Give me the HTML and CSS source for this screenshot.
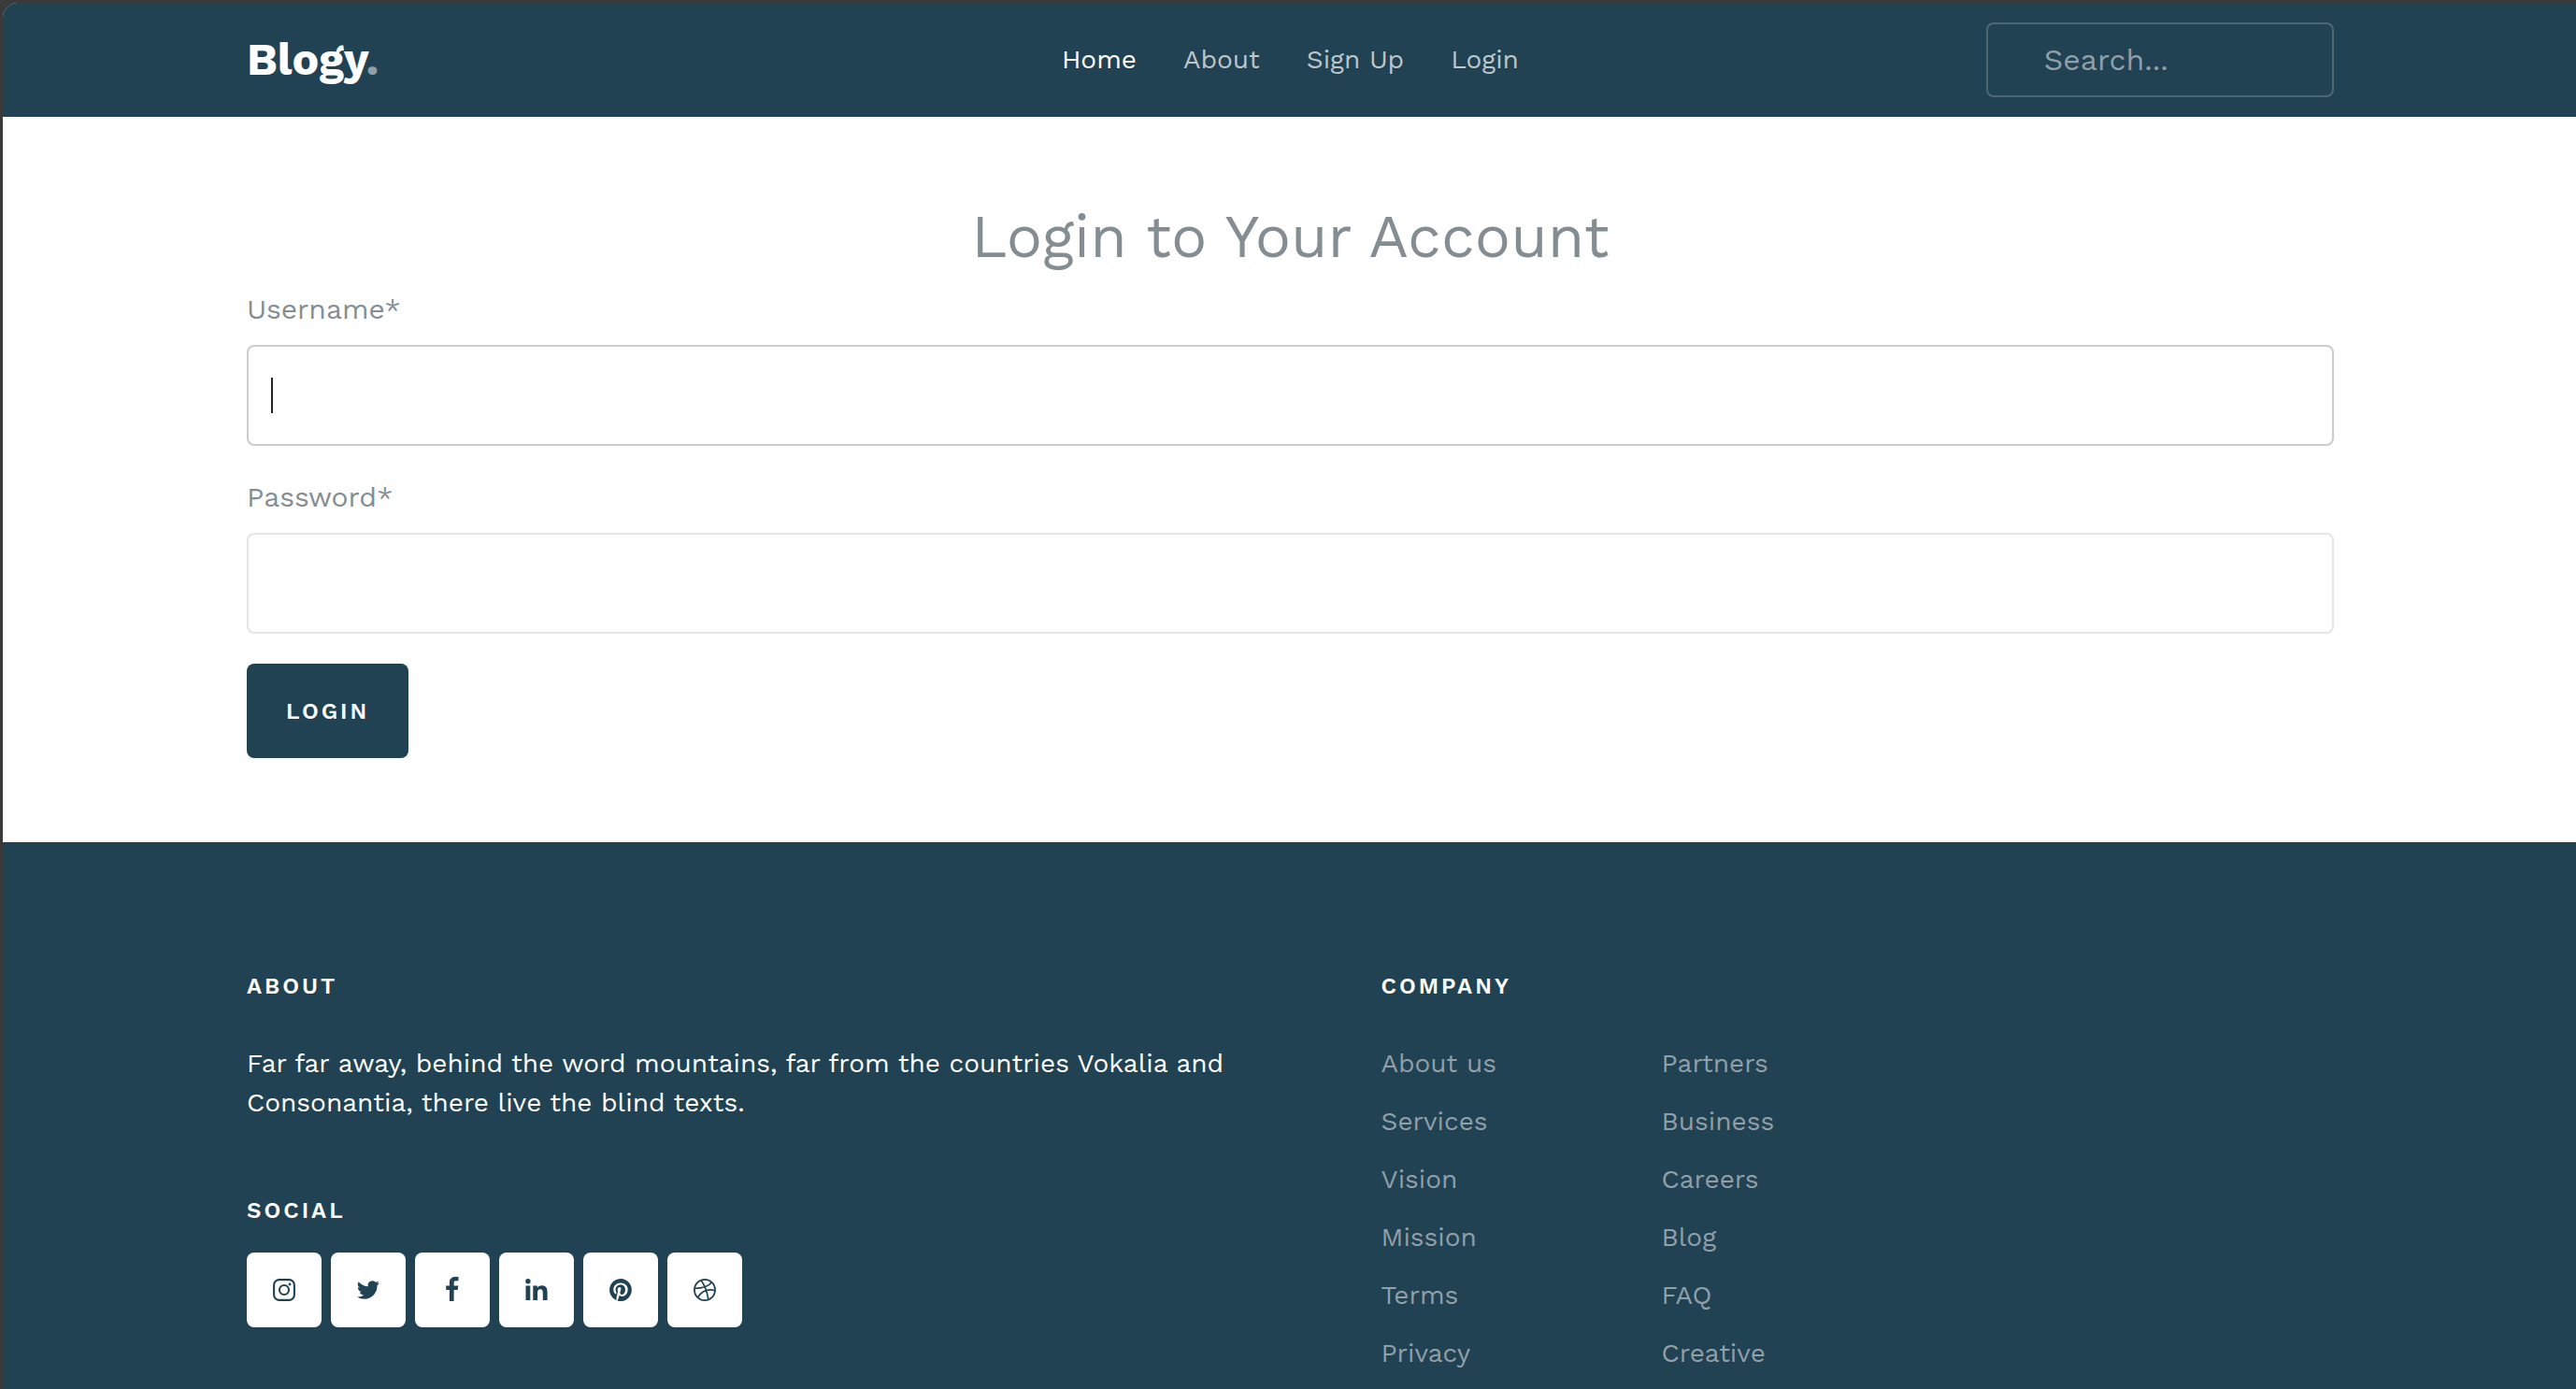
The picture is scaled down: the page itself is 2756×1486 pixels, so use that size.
FILE: index.html
```html
<!DOCTYPE html>
<html lang="en">
<head>
<meta charset="utf-8">
<title>Blogy - Login</title>
<link rel="stylesheet" href="styles.css">
</head>
<body>
<div class="site">
  <header class="site-header">
    <div class="container header-row">
      <a class="logo" href="#">Blogy<span class="logo-dot">.</span></a>
      <nav class="main-nav">
        <a class="active" href="#">Home</a>
        <a href="#">About</a>
        <a href="#">Sign Up</a>
        <a href="#">Login</a>
      </nav>
      <form class="search-form">
        <input type="search" placeholder="Search..." aria-label="Search">
      </form>
    </div>
  </header>

  <main class="container login">
    <h1>Login to Your Account</h1>
    <form>
      <div class="field">
        <label for="username">Username*</label>
        <input id="username" type="text" autofocus>
      </div>
      <div class="field">
        <label for="password">Password*</label>
        <input id="password" type="password">
      </div>
      <button type="submit">Login</button>
    </form>
  </main>

  <footer class="site-footer">
    <div class="container footer-row">
      <div class="about">
        <h2>About</h2>
        <p>Far far away, behind the word mountains, far from the countries Vokalia and Consonantia, there live the blind texts.</p>
        <h2 class="social-title">Social</h2>
        <ul class="social">
          <li><a href="#" aria-label="Instagram"><svg viewBox="0 0 24 24" fill="none" stroke="currentColor" stroke-width="2.1"><rect x="1.1" y="1.1" width="21.8" height="21.8" rx="5.6"/><circle cx="12" cy="12" r="5"/><circle cx="18" cy="6" r="1.4" fill="currentColor" stroke="none"/></svg></a></li>
          <li><a href="#" aria-label="Twitter"><svg viewBox="0 0 24 24" fill="currentColor"><path d="M23.95 4.57a10 10 0 0 1-2.82.77 4.96 4.96 0 0 0 2.16-2.72c-.95.55-2 .95-3.13 1.18a4.92 4.92 0 0 0-8.38 4.48C7.69 8.1 4.07 6.13 1.64 3.16a4.93 4.93 0 0 0 1.52 6.57 4.9 4.9 0 0 1-2.23-.61v.06a4.92 4.92 0 0 0 3.95 4.83 5 5 0 0 1-2.21.08 4.94 4.94 0 0 0 4.6 3.42A9.87 9.87 0 0 1 0 19.54a14 14 0 0 0 7.55 2.21c9.05 0 14-7.5 14-13.98 0-.21 0-.42-.02-.63a9.94 9.94 0 0 0 2.46-2.55z"/></svg></a></li>
          <li><a href="#" aria-label="Facebook"><svg viewBox="0 0 24 24" fill="currentColor"><path d="M18.5-1.900v4.200h-2.600c-1.900 0-2.300.9-2.300 2.200v3h4.700l-.6 4.400h-4.100V24H8.900V11.900H5.200V7.500h3.700V4c0-3.800 2.300-6.100 5.800-6.100 1.600 0 3.100.1 3.800.2z"/></svg></a></li>
          <li><a href="#" aria-label="LinkedIn"><svg viewBox="0 0 24 24" fill="currentColor"><circle cx="2.900" cy="2.700" r="2.700"/><path d="M.500 7.500h4.800V23H.500zM8.300 7.500h4.600v2.200c.8-1.400 2.400-2.500 4.700-2.500 4.800 0 6 2.900 6 7.200V23h-4.800v-7.800c0-2-.4-4-2.800-4s-2.900 1.900-2.900 3.900V23H8.300z"/></svg></a></li>
          <li><a href="#" aria-label="Pinterest"><svg viewBox="0 0 24 24" fill="currentColor"><path d="M12 0a12 12 0 0 0-4.370 23.170c-.1-.95-.2-2.400.04-3.440l1.410-5.960s-.36-.72-.36-1.780c0-1.660.97-2.910 2.170-2.910 1.020 0 1.520.77 1.520 1.690 0 1.030-.65 2.570-.99 3.990-.29 1.190.59 2.170 1.770 2.170 2.130 0 3.760-2.240 3.760-5.480 0-2.860-2.060-4.870-5-4.870-3.410 0-5.410 2.560-5.410 5.200 0 1.030.39 2.140.89 2.740.1.120.11.220.08.350l-.33 1.360c-.05.220-.17.270-.4.160-1.500-.69-2.440-2.880-2.440-4.650 0-3.780 2.750-7.250 7.930-7.250 4.160 0 7.400 2.970 7.400 6.930 0 4.140-2.610 7.460-6.230 7.460-1.220 0-2.360-.63-2.750-1.380l-.75 2.850c-.27 1.050-1 2.350-1.490 3.150A12 12 0 1 0 12 0z"/></svg></a></li>
          <li><a href="#" aria-label="Dribbble"><svg viewBox="0 0 24 24" fill="none" stroke="currentColor" stroke-width="1.700"><circle cx="12" cy="12" r="11.100"/><path d="M8 1.700c3.600 4.700 6.600 12 7.800 20.700M1.100 10.300c8.200.1 14.700-1.900 18.500-6.500M4.500 20.200c4-7 10.500-9.400 18.500-7.700"/></svg></a></li>
        </ul>
      </div>
      <div class="company">
        <h2>Company</h2>
        <div class="link-columns">
          <ul>
            <li><a href="#">About us</a></li>
            <li><a href="#">Services</a></li>
            <li><a href="#">Vision</a></li>
            <li><a href="#">Mission</a></li>
            <li><a href="#">Terms</a></li>
            <li><a href="#">Privacy</a></li>
          </ul>
          <ul>
            <li><a href="#">Partners</a></li>
            <li><a href="#">Business</a></li>
            <li><a href="#">Careers</a></li>
            <li><a href="#">Blog</a></li>
            <li><a href="#">FAQ</a></li>
            <li><a href="#">Creative</a></li>
          </ul>
        </div>
      </div>
    </div>
  </footer>
</div>
</body>
</html>
```
FILE: styles.css
```css
*,
*::before,
*::after {
  box-sizing: border-box;
}

body {
  margin: 0;
  min-height: 100vh;
  padding: 3px 0 0 3px;
  display: flex;
  background: #3a3a3a;
  color: #838d92;
  font-family: "Work Sans", "Open Sans", "Noto Sans", sans-serif;
  font-size: 28px;
  line-height: 42px;
}

h1, h2, p, ul {
  margin: 0;
  padding: 0;
  font-weight: 400;
}

ul {
  list-style: none;
}

a {
  color: inherit;
  text-decoration: none;
}

input, button {
  font-family: inherit;
}

.site {
  flex: 1;
  display: flex;
  flex-direction: column;
  overflow: hidden;
  border-top-left-radius: 16px;
  background: #fff;
}

.container {
  width: 100%;
  max-width: 2281px;
  margin: 0 auto;
  padding-left: 25px;
  padding-right: 23px;
}

/* Header */

.site-header {
  padding: 21px 0;
  background: #214252;
}

.header-row {
  display: grid;
  grid-template-columns: 2fr 8fr 2fr;
  align-items: center;
}

.logo {
  color: #fff;
  font-size: 48px;
  font-weight: 700;
}

.logo-dot {
  color: #909fa8;
}

.main-nav {
  display: flex;
  justify-content: center;
  gap: 50px;
  color: #bcc6cb;
}

.main-nav .active {
  color: #fff;
}

.search-form input {
  display: block;
  width: 100%;
  height: 80px;
  padding: 0 60px;
  border: 2px solid #4d6875;
  border-radius: 8px;
  background: transparent;
  color: #fff;
  font-size: 32px;
}

.search-form input::placeholder {
  color: #909fa8;
  opacity: 1;
}

/* Login form */

.login {
  padding-top: 88px;
  padding-bottom: 90px;
}

.login h1 {
  margin-bottom: 15px;
  font-size: 64px;
  line-height: 80px;
  text-align: center;
}

.field {
  margin-bottom: 32px;
}

.field label {
  display: block;
  margin-bottom: 16px;
  font-size: 30px;
  line-height: 45px;
}

.field input {
  display: block;
  width: 100%;
  height: 108px;
  padding: 0 24px;
  border: 2px solid #e5e5e5;
  border-radius: 8px;
  background: #fff;
  color: #212529;
  font-size: 32px;
}

.field input:focus {
  border-color: #ccc;
  outline: 0;
}

/* Wide text cursor for the empty focused field */
#username:focus {
  background: #fff linear-gradient(#212529, #212529) no-repeat 24px 50% / 2px 38px;
  caret-color: transparent;
}

.login button {
  display: block;
  height: 101px;
  padding: 0 42px;
  border: 0;
  border-radius: 8px;
  background: #214252;
  color: #fff;
  font-size: 24px;
  font-weight: 600;
  letter-spacing: 3px;
  text-transform: uppercase;
}

/* Footer */

.site-footer {
  flex: 1;
  padding-top: 138px;
  background: #214252;
  color: #fff;
}

.footer-row {
  display: grid;
  grid-template-columns: 1fr 1fr;
}

.site-footer h2 {
  margin-bottom: 46px;
  font-size: 24px;
  font-weight: 600;
  line-height: 32px;
  letter-spacing: 3px;
  text-transform: uppercase;
}

.about {
  padding-right: 48px;
}

.site-footer .social-title {
  margin-top: 78px;
  margin-bottom: 29px;
}

.social {
  display: flex;
  gap: 10px;
}

.social a {
  display: flex;
  align-items: center;
  justify-content: center;
  width: 80px;
  height: 80px;
  border-radius: 8px;
  background: #fff;
  color: #214252;
}

.social svg {
  width: 24px;
  height: 24px;
  overflow: visible;
}

.company {
  padding-left: 97px;
  color: #909fa8;
}

.company h2 {
  color: #fff;
}

.link-columns {
  display: grid;
  grid-template-columns: 300px 1fr;
}

.link-columns li + li {
  margin-top: 20px;
}
```
